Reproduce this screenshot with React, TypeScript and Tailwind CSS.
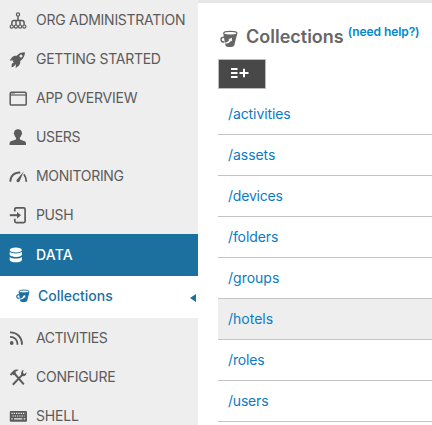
import type { ReactNode } from 'react';

const Svg = ({ children, w = 20 }: { children: ReactNode; w?: number }) => (
  <svg width={w} height="20" viewBox={`0 0 ${w} 20`} fill="none" stroke="currentColor" className="shrink-0">
    {children}
  </svg>
);

const OrgIcon = () => (
  <Svg>
    <g strokeWidth="1.2">
      <circle cx="10" cy="4.4" r="1.6" />
      <circle cx="3.7" cy="16.6" r="1.6" />
      <circle cx="7.9" cy="16.6" r="1.6" />
      <circle cx="12.1" cy="16.6" r="1.6" />
      <circle cx="16.3" cy="16.6" r="1.6" />
    </g>
    <path strokeWidth="1.5" d="M10 6v4.6M3.9 15v-2.2q0-2.2 2.2-2.2h7.8q2.2 0 2.2 2.2V15M8 15v-4M12 15v-4" />
  </Svg>
);
const RocketIcon = () => (
  <Svg>
    <path
      fill="currentColor"
      stroke="none"
      fillRule="evenodd"
      d="M16.9 3.2c-3.7 0-6.1 1-8.2 3.6-2-.3-3.8.3-4.8 1.7l-2.3 3.1 3.7-.2-.4 1.2 1 1c-2 .6-2.3 1.5-2.3 3.2v1.4c1.7 0 3.3-1.7 3.9-3.3l.3 1-.1 3.2 2.8-2.2c1.5-1.2 2-2.8 1.7-4.8 3.3-2.5 4.8-5.4 4.7-8.9zM13 5.5a1.5 1.5 0 1 1 0 3 1.5 1.5 0 0 1 0-3z"
    />
  </Svg>
);
const WindowIcon = () => (
  <Svg>
    <rect x="2.2" y="4.2" width="16" height="12.9" rx="1.2" strokeWidth="1.5" />
    <path strokeWidth="1.2" d="M2.2 7h16" />
    <path strokeWidth="1" d="M3.6 5.6h1M5.6 5.6h1" />
  </Svg>
);
const UserIcon = () => (
  <Svg>
    <path
      fill="currentColor"
      stroke="none"
      d="M10 2.2c2.4 0 3.9 1.3 3.8 3.6.6.1.4 1.7-.3 2-.3 1.3-.9 2.3-1.7 2.9v1.5c.6 1 6.2 1.5 6.2 3.7V18H1.6v-2.1c0-2.2 5.6-2.7 6.5-3.7v-1.5c-.9-.6-1.4-1.6-1.7-2.9-.7-.3-.9-1.9-.3-2C6 3.5 7.6 2.2 10 2.2z"
    />
  </Svg>
);
const GaugeIcon = () => (
  <Svg>
    <path strokeWidth="1.8" d="M2.3 15.8c0-5.5 3.5-9.5 10-9.3M15.9 8.2c1.6 2 2.4 4.4 2.4 7.6" />
    <path fill="currentColor" stroke="none" d="M15.8 5.2 11.6 15.3c-.8 1.6-4 .8-3-1.3z" />
  </Svg>
);
const PushIcon = () => (
  <Svg>
    <path strokeWidth="1.7" d="M6.8 6.6V4.1q0-1.3 1.3-1.3h7.7q1.3 0 1.3 1.3v12.2q0 1.3-1.3 1.3H8.1q-1.3 0-1.3-1.3v-2.6" />
    <path strokeWidth="2" d="M1.8 10.2h8.5" />
    <path fill="currentColor" stroke="none" d="m9 7 4 3.2-4 3.2z" />
  </Svg>
);
const DataIcon = () => (
  <Svg>
    <g fill="currentColor" stroke="none">
      <ellipse cx="6.8" cy="4.9" rx="6.1" ry="2.5" />
      <path d="M.7 6.8c2.4 2.1 9.8 2.1 12.2 0v2.6c0 3.3-12.2 3.3-12.2 0z" />
      <path d="M.7 11.9c2.4 2.1 9.8 2.1 12.2 0v2.8c0 3.5-12.2 3.5-12.2 0z" />
    </g>
  </Svg>
);
const MugIcon = ({ size, hole }: { size: number; hole: string }) => (
  <svg width={size} height={size} viewBox="0 0 18 18" className="shrink-0">
    <path fill="none" stroke="currentColor" strokeWidth="1.5" d="M4.6 7.4C2.4 6.9 1 8 1 9.6c0 1.7 1.4 2.6 3.6 2.3" />
    <path fill="currentColor" d="M3.3 3.4 5.4 15.2c.5 2.5 8.2 2.5 8.9 0L17.3 3.4z" />
    <ellipse cx="10.3" cy="3.2" rx="6.6" ry="1.8" fill={hole} stroke="currentColor" strokeWidth="1.2" />
    <path fill={hole} d="M4.3 12.6c2.6 0 4.1-1.2 5-2.9l-1-.4 3.5-1.6.2 3.6-1-.6c-1.4 1.9-3.5 3-6.5 2.9z" />
  </svg>
);
const FeedIcon = () => (
  <Svg>
    <circle cx="3.7" cy="15" r="1.9" fill="currentColor" stroke="none" />
    <path strokeWidth="1.9" d="M2 8.9c4.6 0 7.5 3 7.5 7.8M2 4.4c7.2 0 12 4.8 12 12.3" />
  </Svg>
);
const ToolsIcon = () => (
  <Svg>
    <path strokeWidth="2" d="m6 6 9.8 11.4M14.5 7.6 4.8 17.8" />
    <path
      fill="currentColor"
      stroke="none"
      d="M1.8 7.2 5.3 3.8C7 2.4 8.8 2.2 10.6 2.9L7.5 4.8l.3 1.6L5.9 8.2l-1.3-1-1.2 1.5zM14 3.6l-1.1 2.8.6 2.2 2 .6c2 .1 3.2-1.7 3-3.9l-2 1.8-1.5-1.2.5-2.8z"
    />
  </Svg>
);
const KeyboardIcon = () => (
  <Svg>
    <rect x="1.8" y="5" width="17.2" height="10.8" rx="1" fill="currentColor" stroke="none" />
    <g stroke="#eeeeee" strokeWidth="1.2">
      <path strokeDasharray="1.3 1" d="M3.4 7.3h14" />
      <path strokeDasharray="1.3 1" d="M4.4 10h12.2" />
      <path d="M3.4 12.9h1.3M6 12.9h8.3M15.7 12.9h1.6" />
    </g>
  </Svg>
);

const Item = ({ icon, label, track }: { icon: ReactNode; label: string; track: string }) => (
  <li className="flex h-[39px] items-center pt-px pl-2 text-[#5b5b5b]">
    {icon}
    <span className={`pl-2 text-[14px] leading-5 ${track}`}>{label}</span>
  </li>
);

const collections = [
  { name: '/activities', track: 'tracking-[-0.1px]' },
  { name: '/assets', track: 'tracking-[-0.05px]' },
  { name: '/devices', track: 'tracking-[-0.2px]' },
  { name: '/folders', track: 'tracking-[-0.1px]' },
  { name: '/groups', track: 'tracking-[0px]' },
  { name: '/hotels', track: 'tracking-[0px]' },
  { name: '/roles', track: 'tracking-[-0.15px]' },
  { name: '/users', track: 'tracking-[-0.2px]' },
];

export default function App() {
  return (
    <div className="flex h-[425px] w-[432px] overflow-hidden bg-white font-['Inter',sans-serif]">
      <nav className="w-[198px] shrink-0 bg-[#eeeeee]">
        <ul>
          <Item icon={<OrgIcon />} label="ORG ADMINISTRATION" track="tracking-[-0.27px]" />
          <Item icon={<RocketIcon />} label="GETTING STARTED" track="tracking-[-0.27px]" />
          <Item icon={<WindowIcon />} label="APP OVERVIEW" track="tracking-[-0.25px]" />
          <Item icon={<UserIcon />} label="USERS" track="tracking-[-0.35px]" />
          <Item icon={<GaugeIcon />} label="MONITORING" track="tracking-[-0.3px]" />
          <Item icon={<PushIcon />} label="PUSH" track="tracking-[-0.4px]" />
          <li>
            <div className="flex h-[42px] items-center bg-[#1c70a0] pb-px pl-[9px] text-white">
              <DataIcon />
              <span className="pl-[7px] text-[14px] leading-5 font-medium tracking-[0.2px]">DATA</span>
            </div>
            <div className="flex h-[42px] items-center bg-white pb-0.5 pl-4 text-[#1c70a0]">
              <MugIcon size={14} hole="#ffffff" />
              <span className="grow pl-2 text-[14px] leading-5 font-medium">Collections</span>
              <svg width="6" height="8" viewBox="0 0 6 8" className="mt-1 mr-0.5">
                <path fill="currentColor" d="M6 0v8L0 4z" />
              </svg>
            </div>
          </li>
          <Item icon={<FeedIcon />} label="ACTIVITIES" track="tracking-[-0.45px]" />
          <Item icon={<ToolsIcon />} label="CONFIGURE" track="tracking-[-0.27px]" />
          <Item icon={<KeyboardIcon />} label="SHELL" track="tracking-[-0.2px]" />
        </ul>
      </nav>
      <main className="min-w-0 grow border-t-[3px] border-[#e6e6e6]">
        <header className="flex h-14 items-start pt-[22px] pl-[22px] whitespace-nowrap">
          <span className="pt-[5px] text-[#666666]">
            <MugIcon size={18} hole="#ffffff" />
          </span>
          <h1 className="pl-2 text-[18px] leading-6 font-semibold text-[#666666]">Collections</h1>
          <a className="pl-1 text-[12px] leading-[14px] font-semibold tracking-[-0.08px] text-[#0088cc]">(need help?)</a>
        </header>
        <button className="ml-5 flex h-[30px] w-12 items-center border border-[#bbbbbb] bg-[#484848] pb-0.5 pl-[11px] text-white">
          <svg width="19" height="10" viewBox="0 0 19 10" stroke="currentColor" strokeWidth="2">
            <path d="M1 1h6.5M1 5h6.5M1 9h6.5M9.5 5h9M14 .8v8.4" />
          </svg>
        </button>
        <ul className="ml-5 pt-[5px]">
          {collections.map((c) => (
            <li
              key={c.name}
              className={`flex h-[41px] items-center border-b border-[#c4c4c4] pb-0.5 pl-2.5 text-[14px] text-[#0b7bc4] ${c.track} ${
                c.name === '/hotels' ? 'bg-[#eeeeee]' : ''
              }`}
            >
              {c.name}
            </li>
          ))}
        </ul>
      </main>
    </div>
  );
}
